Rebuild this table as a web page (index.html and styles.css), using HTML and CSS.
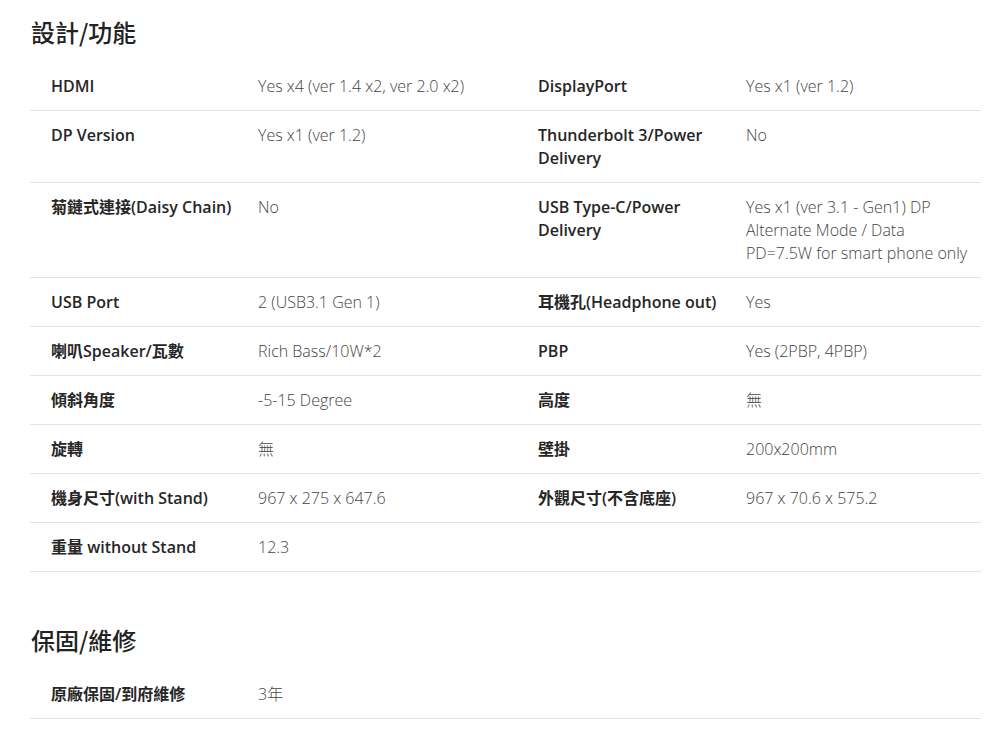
FILE: index.html
```html
<!DOCTYPE html>
<html lang="zh-Hant">
<head>
<meta charset="utf-8">
<link rel="stylesheet" href="styles.css">
</head>
<body>
<div class="page">
  <section class="section">
    <h2 class="heading">設計/功能</h2>
    <div class="spec">
      <div class="row">
        <div class="label">HDMI</div><div class="value">Yes x4 (ver 1.4 x2, ver 2.0 x2)</div>
        <div class="label">DisplayPort</div><div class="value">Yes x1 (ver 1.2)</div>
      </div>
      <div class="row">
        <div class="label">DP Version</div><div class="value">Yes x1 (ver 1.2)</div>
        <div class="label">Thunderbolt 3/Power<br>Delivery</div><div class="value">No</div>
      </div>
      <div class="row">
        <div class="label">菊鏈式連接(Daisy Chain)</div><div class="value">No</div>
        <div class="label">USB Type-C/Power<br>Delivery</div><div class="value">Yes x1 (ver 3.1 - Gen1) DP<br>Alternate Mode / Data<br>PD=7.5W for smart phone only</div>
      </div>
      <div class="row">
        <div class="label">USB Port</div><div class="value">2 (USB3.1 Gen 1)</div>
        <div class="label">耳機孔(Headphone out)</div><div class="value">Yes</div>
      </div>
      <div class="row">
        <div class="label">喇叭Speaker/瓦數</div><div class="value">Rich Bass/10W*2</div>
        <div class="label">PBP</div><div class="value">Yes (2PBP, 4PBP)</div>
      </div>
      <div class="row">
        <div class="label">傾斜角度</div><div class="value">-5-15 Degree</div>
        <div class="label">高度</div><div class="value">無</div>
      </div>
      <div class="row">
        <div class="label">旋轉</div><div class="value">無</div>
        <div class="label">壁掛</div><div class="value">200x200mm</div>
      </div>
      <div class="row">
        <div class="label">機身尺寸(with Stand)</div><div class="value">967 x 275 x 647.6</div>
        <div class="label">外觀尺寸(不含底座)</div><div class="value">967 x 70.6 x 575.2</div>
      </div>
      <div class="row">
        <div class="label">重量 without Stand</div><div class="value">12.3</div>
        <div class="label"></div><div class="value"></div>
      </div>
    </div>
  </section>
  <section class="section section-2">
    <h2 class="heading">保固/維修</h2>
    <div class="spec">
      <div class="row">
        <div class="label">原廠保固/到府維修</div><div class="value">3年</div>
        <div class="label"></div><div class="value"></div>
      </div>
    </div>
  </section>
</div>
</body>
</html>
```

FILE: styles.css
```css
html, body {
  margin: 0;
  padding: 0;
  background: #fff;
}
body {
  font-family: "Open Sans", "Noto Sans CJK TC", sans-serif;
  color: #222;
}
.page {
  padding: 16px 24px 0 30px;
  width: 951px;
}
.heading {
  margin: 0 0 0 1px;
  font-family: "Noto Sans CJK TC", sans-serif;
  font-size: 24px;
  font-weight: 500;
  line-height: 32px;
  color: #222;
}
.section-2 {
  margin-top: 52px;
}
.spec {
  margin-top: 14px;
}
.section-2 .spec {
  margin-top: 14px;
}
.row {
  display: grid;
  grid-template-columns: 207px 280px 208px 256px;
  border-bottom: 1px solid #e3e3e3;
}
.label, .value {
  padding: 13px 0 12px 21px;
  font-size: 16px;
  line-height: 23px;
  white-space: nowrap;
}
.label {
  font-weight: 600;
  color: #262626;
}
.value {
  font-weight: 300;
  color: #444;
}
```
